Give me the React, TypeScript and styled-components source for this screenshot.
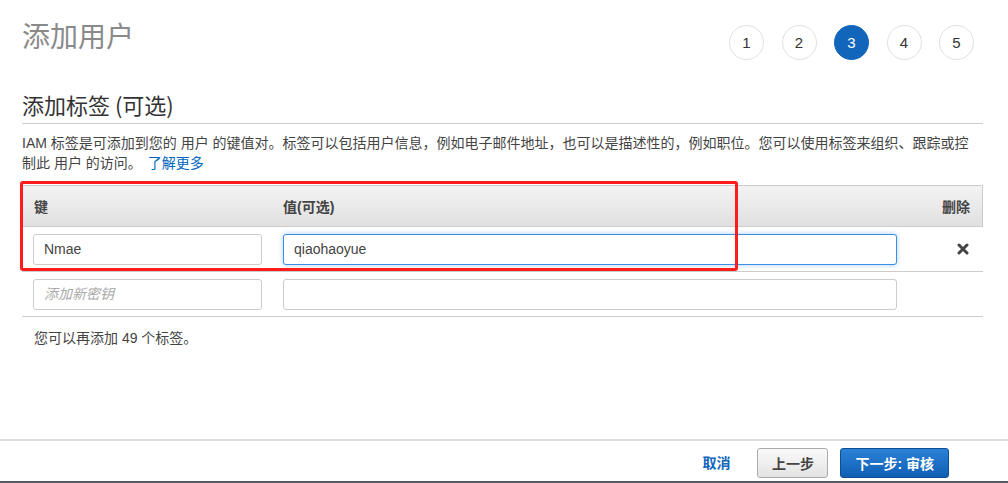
import React from "react";
import styled, { createGlobalStyle } from "styled-components";

const Global = createGlobalStyle`
  html, body { margin: 0; padding: 0; background: #fff; }
  body {
    font-family: "Liberation Sans", "Noto Sans CJK SC", Arial, sans-serif;
    font-size: 14px;
    color: #444;
  }
  * { box-sizing: border-box; }
`;

const Page = styled.div`
  display: flex;
  flex-direction: column;
  height: 483px;
  overflow: hidden;
`;

const Header = styled.div`
  display: flex;
  justify-content: space-between;
  align-items: flex-start;
  padding: 17px 34px 0 22px;
  height: 89px;
`;

const Title = styled.h1`
  margin: 0;
  font-weight: 400;
  font-size: 28px;
  line-height: 36px;
  color: #8a8a8a;
  font-family: "Noto Sans CJK SC", "Liberation Sans", sans-serif;
`;

const Steps = styled.div`
  display: flex;
  gap: 17.5px;
  margin-top: 8px;
`;

const Step = styled.div<{ $active?: boolean }>`
  width: 35px;
  height: 35px;
  border-radius: 50%;
  border: 1px solid ${(p) => (p.$active ? "#1166bb" : "#e0e0e0")};
  background: ${(p) => (p.$active ? "#1166bb" : "#fff")};
  color: ${(p) => (p.$active ? "#fff" : "#333")};
  display: flex;
  align-items: center;
  justify-content: center;
  font-size: 15px;
  font-family: "Liberation Sans", Arial, sans-serif;
`;

const Content = styled.div`
  padding: 0 25px 0 22px;
`;

const SectionTitle = styled.h2`
  margin: 0;
  font-weight: 400;
  font-size: 22px;
  line-height: 30px;
  color: #333;
  padding-bottom: 4px;
  border-bottom: 1px solid #ccc;
  font-family: "Noto Sans CJK SC", "Liberation Sans", sans-serif;
`;

const Desc = styled.p`
  margin: 0;
  padding-top: 9px;
  max-width: 955px;
  line-height: 20px;
  color: #444;
  font-size: 14px;
`;

const Link = styled.a`
  color: #0066c0;
  text-decoration: none;
  margin-left: 6px;
`;

const TableWrap = styled.div`
  position: relative;
  margin-top: 12px;
`;

const Grid = styled.div`
  display: grid;
  grid-template-columns: 250px 1fr 76px;
`;

const HeadCell = styled.div<{ $right?: boolean; $first?: boolean; $last?: boolean }>`
  height: 42px;
  display: flex;
  align-items: center;
  justify-content: ${(p) => (p.$right ? "flex-end" : "flex-start")};
  padding: 0 12px 0 11px;
  background: linear-gradient(#f3f3f3, #e0e0e0);
  border-top: 1px solid #ccc;
  border-bottom: 1px solid #ccc;
  border-left: ${(p) => (p.$first ? "1px solid #ccc" : "none")};
  border-right: ${(p) => (p.$last ? "1px solid #ccc" : "none")};
  font-weight: 700;
  color: #444;
  font-size: 14px;
`;

const Cell = styled.div<{ $end?: boolean }>`
  height: 45px;
  display: flex;
  align-items: center;
  justify-content: ${(p) => (p.$end ? "flex-end" : "flex-start")};
  padding: 0 ${(p) => (p.$end ? "14px" : "10px")} 0 11px;
  border-bottom: 1px solid #ccc;
`;

const Input = styled.input<{ $focus?: boolean }>`
  width: 100%;
  height: 31px;
  border: 1px solid ${(p) => (p.$focus ? "#3a8ee6" : "#ccc")};
  border-radius: 3px;
  box-shadow: ${(p) => (p.$focus ? "0 0 5px rgba(58,142,230,0.45)" : "none")};
  padding: 0 10px;
  font-size: 14px;
  color: #444;
  font-family: "Liberation Sans", "Noto Sans CJK SC", Arial, sans-serif;
  outline: none;
  &::placeholder {
    color: #aaa;
    font-style: italic;
  }
`;

const RemoveIcon = styled.svg`
  width: 12px;
  height: 12px;
`;

const Annotation = styled.div`
  position: absolute;
  left: -2px;
  top: -4px;
  width: 718px;
  height: 90px;
  border: 3px solid #ff1c1c;
  border-radius: 3px;
  pointer-events: none;
`;

const Remaining = styled.p`
  margin: 0;
  padding: 11px 0 0 12px;
  line-height: 20px;
  color: #444;
  font-size: 14px;
`;

const Footer = styled.div`
  margin-top: auto;
  border-top: 2px solid #ddd;
  border-bottom: 2px solid #545b64;
  display: flex;
  justify-content: flex-end;
  align-items: flex-start;
  padding: 7px 59px 0 0;
  height: 44px;
`;

const CancelLink = styled.a`
  color: #1166bb;
  font-weight: 700;
  font-size: 14px;
  line-height: 30px;
  text-decoration: none;
  margin-right: 27px;
`;

const Button = styled.button<{ $primary?: boolean }>`
  height: 30px;
  padding: 0 ${(p) => (p.$primary ? "14px" : "13.5px")};
  border-radius: 3px;
  font-weight: 700;
  font-size: 14px;
  font-family: "Liberation Sans", "Noto Sans CJK SC", Arial, sans-serif;
  border: 1px solid ${(p) => (p.$primary ? "#0d4f94" : "#aaa")};
  background: ${(p) =>
    p.$primary ? "linear-gradient(#2b82d6, #0f5fb5)" : "linear-gradient(#fafafa, #e3e3e3)"};
  color: ${(p) => (p.$primary ? "#fff" : "#444")};
  margin-left: ${(p) => (p.$primary ? "12px" : "0")};
`;

export default function App() {
  return (
    <Page>
      <Global />
      <Header>
        <Title>添加用户</Title>
        <Steps>
          {[1, 2, 3, 4, 5].map((n) => (
            <Step key={n} $active={n === 3}>
              {n}
            </Step>
          ))}
        </Steps>
      </Header>
      <Content>
        <SectionTitle>添加标签 (可选)</SectionTitle>
        <Desc>
          IAM 标签是可添加到您的 用户 的键值对。标签可以包括用户信息，例如电子邮件地址，也可以是描述性的，例如职位。您可以使用标签来组织、跟踪或控制此 用户 的访问。
          <Link href="#">了解更多</Link>
        </Desc>
        <TableWrap>
          <Grid>
            <HeadCell $first>键</HeadCell>
            <HeadCell>值(可选)</HeadCell>
            <HeadCell $right $last>删除</HeadCell>

            <Cell>
              <Input defaultValue="Nmae" />
            </Cell>
            <Cell>
              <Input $focus defaultValue="qiaohaoyue" />
            </Cell>
            <Cell $end>
              <RemoveIcon viewBox="0 0 12 12">
                <path d="M2 2 L10 10 M10 2 L2 10" stroke="#444" strokeWidth="3" strokeLinecap="round" />
              </RemoveIcon>
            </Cell>

            <Cell>
              <Input placeholder="添加新密钥" />
            </Cell>
            <Cell>
              <Input />
            </Cell>
            <Cell />
          </Grid>
          <Annotation />
        </TableWrap>
        <Remaining>您可以再添加 49 个标签。</Remaining>
      </Content>
      <Footer>
        <CancelLink href="#">取消</CancelLink>
        <Button>上一步</Button>
        <Button $primary>下一步: 审核</Button>
      </Footer>
    </Page>
  );
}
